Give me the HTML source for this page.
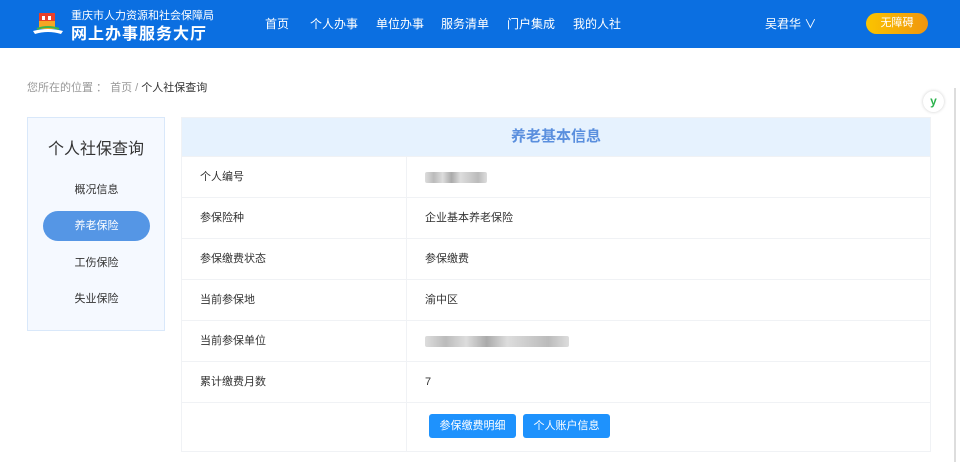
<!DOCTYPE html>
<html><head><meta charset="utf-8"><style>
*{margin:0;padding:0;box-sizing:border-box}
body{width:960px;height:462px;overflow:hidden;background:#fff;font-family:"Liberation Sans","Noto Sans CJK SC",sans-serif;color:#333;position:relative}
.hd{position:absolute;left:0;top:0;width:960px;height:48px;background:#0b6fe1}
.logo1{position:absolute;left:71px;top:7px;font-size:11px;color:#fff}
.logo2{position:absolute;left:71px;top:20px;font-size:16px;font-weight:bold;color:#fff;letter-spacing:1px}
.nav{position:absolute;top:15px;font-size:12px;color:#fff}
.btn-wz{position:absolute;left:866px;top:13px;width:62px;height:21px;border-radius:11px;background:linear-gradient(90deg,#fbc400,#f0950f);color:#fff;font-size:11px;text-align:center;line-height:21px}
.bc{position:absolute;left:27px;top:79px;font-size:11px;color:#999}
.bc b{font-weight:normal;color:#333}
.side{position:absolute;left:27px;top:117px;width:138px;height:214px;background:#f5f9ff;border:1px solid #d9e8fa}
.side h2{position:absolute;top:17px;width:100%;text-align:center;font-size:16px;font-weight:normal;color:#333}
.si{position:absolute;left:15px;width:107px;height:30px;line-height:30px;text-align:center;font-size:11px;color:#333;border-radius:15px}
.tb{position:absolute;left:181px;top:117px;width:750px;border:1px solid #f0f2f5}
.th{height:38px;background:#e6f2fe;text-align:center;line-height:38px;font-size:15px;font-weight:bold;color:#5a8fde}
.row{height:41px;border-top:1px solid #f0f2f5;display:flex;font-size:11px;line-height:40px}
.row .l{width:225px;padding-left:18px;border-right:1px solid #f0f2f5}
.row .r{padding-left:18px}
.blur{display:inline-block;height:11px;vertical-align:middle;background:linear-gradient(90deg,#ddd,#bbb,#ddd,#aaa,#ddd,#ccc,#bbb,#ddd);border-radius:2px}
.bt{position:absolute;top:414px;height:24px;border-radius:3px;background:#1e92fd;color:#fff;font-size:11px;text-align:center;line-height:24px}
</style></head><body>
<div class="hd">
<svg style="position:absolute;left:32px;top:10px" width="32" height="28" viewBox="0 0 32 28"><rect x="7" y="3" width="16" height="16" fill="#e8402a"/><rect x="7" y="11" width="16" height="8" fill="#f5a623"/><rect x="10" y="6" width="3" height="4" fill="#fff"/><rect x="16" y="6" width="3" height="4" fill="#fff"/><path d="M1 21 Q16 17 31 21 L29 24 Q16 20 3 24Z" fill="#fff"/><path d="M5 19 Q16 15 27 19" stroke="#3cb44b" stroke-width="2" fill="none"/></svg>
<div class="logo1">重庆市人力资源和社会保障局</div>
<div class="logo2">网上办事服务大厅</div>
<div class="nav" style="left:265px">首页</div>
<div class="nav" style="left:310px">个人办事</div>
<div class="nav" style="left:376px">单位办事</div>
<div class="nav" style="left:441px">服务清单</div>
<div class="nav" style="left:507px">门户集成</div>
<div class="nav" style="left:573px">我的人社</div>
<div class="nav" style="left:765px">吴君华 ∨</div>
<div class="btn-wz">无障碍</div>
</div>
<div class="bc">您所在的位置 ： 首页 / <b>个人社保查询</b></div>
<div style="position:absolute;left:923px;top:91px;width:21px;height:21px;border-radius:50%;background:#fff;box-shadow:0 0 3px #ccc;color:#2bb24c;font-weight:bold;font-size:12px;text-align:center;line-height:21px">y</div>
<div style="position:absolute;left:954px;top:88px;width:2px;height:374px;background:#ddd"></div>
<div class="side"><h2>个人社保查询</h2>
<div class="si" style="top:57px">概况信息</div>
<div class="si" style="top:93px;background:#5596e5;color:#fff">养老保险</div>
<div class="si" style="top:130px">工伤保险</div>
<div class="si" style="top:166px">失业保险</div>
</div>
<div class="tb">
<div class="th">养老基本信息</div>
<div class="row"><div class="l">个人编号</div><div class="r"><span class="blur" style="width:62px"></span></div></div>
<div class="row"><div class="l">参保险种</div><div class="r">企业基本养老保险</div></div>
<div class="row"><div class="l">参保缴费状态</div><div class="r">参保缴费</div></div>
<div class="row"><div class="l">当前参保地</div><div class="r">渝中区</div></div>
<div class="row"><div class="l">当前参保单位</div><div class="r"><span class="blur" style="width:144px"></span></div></div>
<div class="row"><div class="l">累计缴费月数</div><div class="r">7</div></div>
<div class="row" style="height:49px"><div class="l"></div></div>
</div>
<div class="bt" style="left:429px;width:87px">参保缴费明细</div>
<div class="bt" style="left:523px;width:87px">个人账户信息</div>
</body></html>
